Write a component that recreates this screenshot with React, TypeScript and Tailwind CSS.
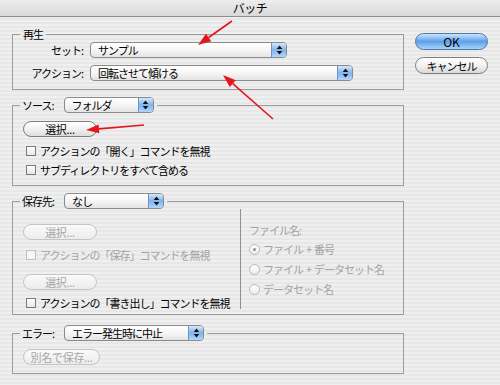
import React from "react";

const TXT = "text-[11px] tracking-[-1px] leading-[14px]";

const arrowDefs = [
  { tail: [232, 21], tip: [198, 45] },
  { tail: [273, 119], tip: [223, 75] },
  { tail: [144, 125], tip: [86, 130] },
];

function RedArrows() {
  return (
    <svg className="absolute left-0 top-0 pointer-events-none" width="500" height="385" viewBox="0 0 500 385">
      {arrowDefs.map((a, i) => {
        const [tx, ty] = a.tail;
        const [px, py] = a.tip;
        const dx = px - tx;
        const dy = py - ty;
        const len = Math.hypot(dx, dy);
        const ux = dx / len;
        const uy = dy / len;
        const hl = 13;
        const hw = 4.5;
        const bx = px - ux * hl;
        const by = py - uy * hl;
        const nx = -uy;
        const ny = ux;
        const pts = `${px},${py} ${bx + nx * hw},${by + ny * hw} ${bx - nx * hw},${by - ny * hw}`;
        return (
          <g key={i}>
            <line x1={tx} y1={ty} x2={bx} y2={by} stroke="#e4161b" strokeWidth="1.6" />
            <polygon points={pts} fill="#e4161b" />
          </g>
        );
      })}
    </svg>
  );
}

function Popup({ className, label }: { className: string; label: string }) {
  return (
    <div
      className={`flex h-[16px] rounded-[4px] border border-[#8a8a8a] overflow-hidden bg-gradient-to-b from-white via-[#f6f6f6] to-[#e4e4e4] ${className}`}
    >
      <span className={`flex-1 pl-[7px] text-black whitespace-nowrap ${TXT}`}>{label}</span>
      <span className="w-[15px] flex items-center justify-center border-l border-[#6d93c0] bg-gradient-to-b from-[#d6e8fb] via-[#7fb3ee] to-[#b2d6fa]">
        <svg width="7" height="10" viewBox="0 0 7 10">
          <path d="M3.5 0.5 L6.3 4 L0.7 4 Z" fill="#111" />
          <path d="M0.7 6 L6.3 6 L3.5 9.5 Z" fill="#111" />
        </svg>
      </span>
    </div>
  );
}

function PillButton({ className, label, disabled }: { className: string; label: string; disabled?: boolean }) {
  return (
    <div
      className={`flex items-center justify-center h-[16px] rounded-full border text-[11px] leading-[14px] tracking-[-0.3px] ${
        disabled
          ? "border-[#c4c4c4] text-[#a6a6a6] bg-gradient-to-b from-[#fafafa] to-[#ececec]"
          : "border-[#7e7e7e] text-black bg-gradient-to-b from-white via-[#f2f2f2] to-[#dcdcdc]"
      } ${className}`}
    >
      {label}
    </div>
  );
}

function Checkbox({ label, disabled }: { label: string; disabled?: boolean }) {
  return (
    <div className="flex items-center h-[19px] ml-[13px]">
      <span
        className={`w-[10px] h-[10px] border ${
          disabled ? "border-[#c0c0c0] bg-[#f7f7f7]" : "border-[#7a7a7a] bg-gradient-to-b from-white to-[#e6e6e6]"
        }`}
      />
      <span className={`ml-[4px] whitespace-nowrap ${TXT} ${disabled ? "text-[#a3a3a3]" : "text-black"}`}>{label}</span>
    </div>
  );
}

function Radio({ children, selected }: { children: React.ReactNode; selected?: boolean }) {
  return (
    <div className="flex items-center h-[20px]">
      <span className="w-[11px] h-[11px] rounded-full border border-[#b8b8b8] bg-gradient-to-b from-white to-[#ededed] flex items-center justify-center">
        {selected && <span className="w-[3px] h-[3px] rounded-full bg-[#8f8f8f]" />}
      </span>
      <span className={`ml-[3px] whitespace-nowrap text-[#a3a3a3] ${TXT}`}>{children}</span>
    </div>
  );
}

function Group({
  className,
  header,
  bodyClass,
  children,
}: {
  className: string;
  header: React.ReactNode;
  bodyClass: string;
  children: React.ReactNode;
}) {
  return (
    <div className={`flex flex-col ${className}`}>
      <div className="flex items-center">
        <div className="w-[8px] self-stretch flex flex-col">
          <div className="flex-1" />
          <div className="flex-1 border-t border-l border-[#9b9b9b]" />
        </div>
        {header}
        <div className="flex-1 self-stretch flex flex-col">
          <div className="flex-1" />
          <div className="flex-1 border-t border-r border-[#9b9b9b]" />
        </div>
      </div>
      <div className={`border-l border-r border-b border-[#9b9b9b] ${bodyClass}`}>{children}</div>
    </div>
  );
}

function PopupHeader({ label, popupClass, value }: { label: string; popupClass: string; value: string }) {
  return (
    <div className="flex items-center pl-[2px] pr-[3px] gap-[10px]">
      <span className={`text-black ${TXT}`}>{label}</span>
      <Popup className={popupClass} label={value} />
    </div>
  );
}

export default function App() {
  return (
    <div className="relative w-[500px] h-[385px] overflow-hidden font-['Noto_Sans_CJK_JP',sans-serif] bg-[repeating-linear-gradient(to_bottom,#efefef_0px,#efefef_2px,#e7e7e7_2px,#e7e7e7_4px)]">
      <div className="h-[17px] border-b border-[#8e8e8e] bg-gradient-to-b from-[#ededed] to-[#d9d9d9] flex items-center justify-center">
        <span className="text-[12px] leading-[16px] tracking-[-0.5px] text-black">バッチ</span>
      </div>
      <div className="flex items-start">
        <div className="ml-[12px] w-[392px] flex flex-col">
          <Group
            className="mt-[10px]"
            header={<span className={`h-[14px] px-[3px] text-black ${TXT}`}>再生</span>}
            bodyClass="h-[49px] pt-[1px] flex flex-col gap-[7px]"
          >
            <div className="flex items-center gap-[7px]">
              <span className={`w-[70px] text-right text-black ${TXT}`}>セット:</span>
              <Popup className="w-[197px]" label="サンプル" />
            </div>
            <div className="flex items-center gap-[7px]">
              <span className={`w-[70px] text-right text-black ${TXT}`}>アクション:</span>
              <Popup className="w-[263px]" label="回転させて傾ける" />
            </div>
          </Group>

          <Group
            className="mt-[7px]"
            header={<PopupHeader label="ソース:" popupClass="w-[90px]" value="フォルダ" />}
            bodyClass="h-[73px]"
          >
            <PillButton className="mt-[8px] ml-[10px] w-[74px]" label="選択..." />
            <div className="mt-[4px]">
              <Checkbox label="アクションの「開く」コマンドを無視" />
              <Checkbox label="サブディレクトリをすべて含める" />
            </div>
          </Group>

          <Group
            className="mt-[7px]"
            header={<PopupHeader label="保存先:" popupClass="w-[100px]" value="なし" />}
            bodyClass="h-[106px] flex"
          >
            <div className="w-[227px] flex flex-col">
              <PillButton className="mt-[15px] ml-[10px] w-[74px]" label="選択..." disabled />
              <div className="mt-[5px]">
                <Checkbox label="アクションの「保存」コマンドを無視" disabled />
              </div>
              <PillButton className="mt-[10px] ml-[10px] w-[74px]" label="選択..." disabled />
              <div className="mt-[3px]">
                <Checkbox label="アクションの「書き出し」コマンドを無視" />
              </div>
            </div>
            <div className="h-[100px] border-l border-[#8f8f8f] pl-[8px] flex flex-col">
              <div className={`mt-[12px] h-[18px] flex items-center text-[#a3a3a3] ${TXT}`}>ファイル名:</div>
              <Radio selected>
                ファイル<span className="px-[3px]">+</span>番号
              </Radio>
              <Radio>
                ファイル<span className="px-[3px]">+</span>データセット名
              </Radio>
              <Radio>データセット名</Radio>
            </div>
          </Group>

          <Group
            className="mt-[10px]"
            header={<PopupHeader label="エラー:" popupClass="w-[140px]" value="エラー発生時に中止" />}
            bodyClass="h-[33px]"
          >
            <PillButton className="mt-[8px] ml-[10px] w-[77px]" label="別名で保存..." disabled />
          </Group>
        </div>

        <div className="ml-[11px] pt-[16px] flex flex-col gap-[7px]">
          <div className="w-[73px] h-[17px] rounded-full border border-[#4b77a6] bg-gradient-to-b from-[#cfe5fb] via-[#5d9fe8] to-[#a8d5fb] flex items-center justify-center text-[12px] leading-[14px] text-black">
            OK
          </div>
          <div className={`w-[73px] h-[17px] rounded-full border border-[#7e7e7e] bg-gradient-to-b from-white via-[#f2f2f2] to-[#d9d9d9] flex items-center justify-center text-black ${TXT}`}>
            キャンセル
          </div>
        </div>
      </div>
      <RedArrows />
    </div>
  );
}
